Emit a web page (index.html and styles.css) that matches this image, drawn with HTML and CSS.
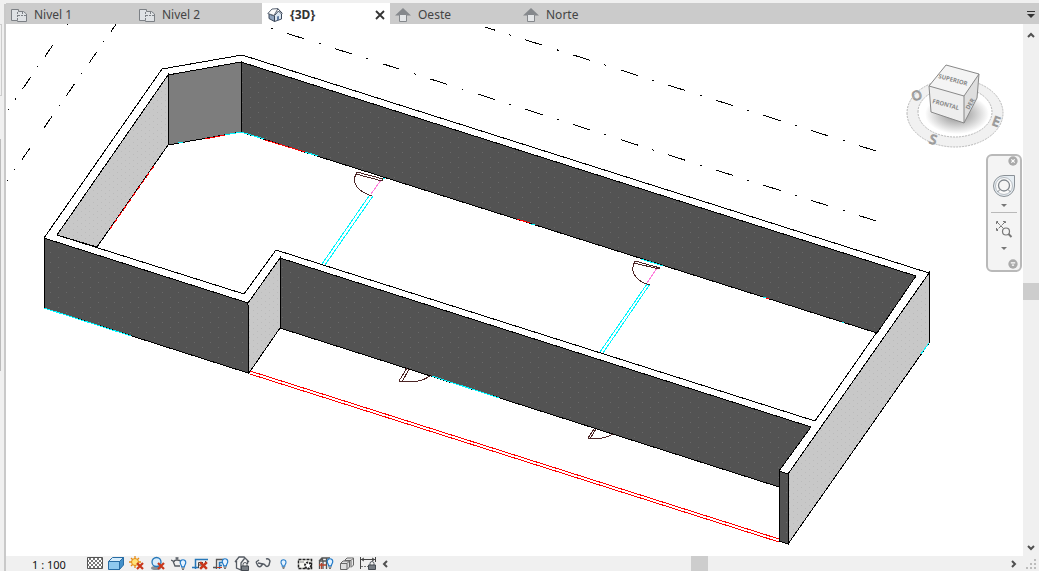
FILE: index.html
```
<!DOCTYPE html>
<html lang="es">

<head>
    <meta charset="UTF-8">
    <meta name="viewport" content="width=device-width, initial-scale=1.0">
    <title>{3D}</title>
    <link rel="stylesheet" href="styles.css">
</head>

<body>
    <!-- Shared icon parts -->
    <svg class="sprite" aria-hidden="true">
        <symbol id="plan" viewBox="0 0 16 14">
            <path d="M.5 1.500H7.500V3.500H12.500L15.500 6V13.500H6.500V12.500H.5Z" fill="#dfe2e5" stroke="#7c8085" />
            <path d="M6.500 12V4M7 7.500H15M11.500 4V7" fill="none" stroke="#7c8085" stroke-dasharray="2 1" />
        </symbol>
        <symbol id="elevation" viewBox="0 0 16 14">
            <path d="M8 0L16 7.500H0Z" fill="#85888c" />
            <path d="M4.500 6.500H11.500V13.500H4.500Z" fill="#e4e6e8" stroke="#85888c" />
        </symbol>
        <symbol id="red-x" viewBox="0 0 8 8">
            <path d="M1 1L7 7M7 1L1 7" stroke="#c8371b" stroke-width="2.200" />
        </symbol>
        <symbol id="bulb" viewBox="0 0 8 12">
            <path d="M2.500 8.500C2.500 6.500 1 6 1 3.800A3 3 0 0 1 7 3.800C7 6 5.500 6.500 5.500 8.500Z" fill="#e5f3ff" stroke="#237bc9" stroke-width="1.300" />
            <path d="M2.500 10H5.500M3 11.500H5" stroke="#555" />
        </symbol>
        <symbol id="lock" viewBox="0 0 8 9">
            <path d="M2 4V2.500A2 2 0 0 1 6 2.500V4" fill="none" stroke="#555b63" />
            <path d="M.5 4H7.500V8.500H.5Z" fill="#777d84" stroke="#444a51" />
        </symbol>
    </svg>

    <aside class="gutter">
        <div class="panel-edge"></div>
        <div class="panel-line"></div>
    </aside>

    <div class="workspace">
        <nav class="tabs">
            <div class="tab">
                <button type="button"><svg class="tab-icon"><use href="#plan" /></svg>Nivel 1</button>
            </div>
            <div class="tab">
                <button type="button"><svg class="tab-icon"><use href="#plan" /></svg>Nivel 2</button>
            </div>
            <div class="tab active">
                <button type="button">
                    <svg class="tab-icon" viewBox="0 0 16 14">
                        <path d="M2 6V10.500L7.500 13.500V8Z" fill="#8fa3bd" stroke="#3a4658" />
                        <path d="M7.500 7.500L11.500 3L14.500 6V11L7.500 13.500Z" fill="#dbe6f1" stroke="#3a4658" />
                        <path d="M.8 5.500L5 1L11 .6L7 7.500Z" fill="#fbfbfb" stroke="#5b6573" />
                        <path d="M11 .8L15.500 5.500" stroke="#3a4658" />
                        <path d="M10 8.500L12 8V11.800L10 12.500Z" fill="#5f7ba0" />
                    </svg>{3D}
                </button>
                <button type="button" class="close" aria-label="Cerrar">
                    <svg viewBox="0 0 10 10"><path d="M1 1L9 9M9 1L1 9" stroke="#333" stroke-width="1.800" /></svg>
                </button>
            </div>
            <div class="tab">
                <button type="button"><svg class="tab-icon"><use href="#elevation" /></svg>Oeste</button>
            </div>
            <div class="tab">
                <button type="button"><svg class="tab-icon"><use href="#elevation" /></svg>Norte</button>
            </div>
            <button type="button" class="tab-list" aria-label="Lista de vistas">
                <svg viewBox="0 0 8 8"><path d="M0 .5H8" stroke="#333" /><path d="M0 3H8L4 7Z" fill="#333" /></svg>
            </button>
        </nav>

        <div class="view">
            <main class="canvas">
                <!-- Model, drawn in window coordinates -->
                <svg class="model" viewBox="6 24 1017 532" role="img" aria-label="Vista 3D">
                    <defs>
                        <pattern id="dark" width="16" height="10" patternUnits="userSpaceOnUse">
                            <rect width="16" height="10" fill="#535353" />
                            <path d="M2 2h1v1h-1zM10 7h1v1h-1z" fill="#696969" />
                        </pattern>
                        <pattern id="light" width="8" height="6" patternUnits="userSpaceOnUse">
                            <rect width="8" height="6" fill="#c8c8c8" />
                            <path d="M1 1h1v1h-1zM5 4h1v1h-1z" fill="#bbb" />
                        </pattern>
                    </defs>

                    <!-- Reference planes -->
                    <g class="edge">
                        <path class="level" d="M876 151L485 27" />
                        <path class="level" d="M876 221L264 26" />
                        <path class="grid-line" d="M75 13L8 110" />
                        <path class="grid-line" d="M119 20L7 181" />
                    </g>

                    <!-- Walls -->
                    <g class="edge">
                        <path d="M44 238L162 69L242 55L929 273L788 474L779 471L811 427L280 258L248 303Z" fill="#fff" />
                        <path d="M57 235L168 75L241 62L916 276L815 421L276 250L244 294Z" fill="#fff" />
                        <path d="M57 235L168 75V145L97 247Z" fill="url(#light)" />
                        <path d="M168 75L241 62V132L168 145Z" fill="#7d7d7d" />
                        <path d="M241 62L916 276L877 333L241 132Z" fill="url(#dark)" />
                        <path d="M44 238L248 303V373L44 308Z" fill="url(#dark)" />
                        <path d="M248 303L280 258V328L249 373Z" fill="url(#light)" />
                        <path d="M280 258L811 427L779 471V487L280 328Z" fill="url(#dark)" />
                        <path d="M788 474L929 273V343L788 544Z" fill="url(#light)" />
                        <path d="M779 471L788 474V544L779 541Z" fill="url(#dark)" />
                    </g>

                    <!-- Imported plan lines -->
                    <g class="cyan">
                        <path d="M44 308L131 336M225 135L241 132L264 139M305 152L318 156M432 376L499 398M921 354L929 343" />
                        <path d="M369 196L322 264M373 196L325 265M381 178L385 179M647 284L600 352M650 284L603 353M641 259L663 266M763 297L766 298M842 322L844 323M178 143L183 142M531 224L535 225" />
                    </g>
                    <g class="red">
                        <path d="M250 371L779 539M250 374L779 542M205 139L225 135M265 140L305 152M517 219L530 223M766 298L769 299" />
                        <path d="M154 166L110 229" stroke-dasharray="6 2" />
                    </g>
                    <path class="pink" d="M381 180L371 194M657 268L647 283" />
                    <g class="door">
                        <path d="M357 172L383 179L382 181L356 174M357 172Q352 180 357 187Q362 193 372 196" />
                        <path d="M635 261L660 268L659 269L634 263M635 261Q630 270 636 277Q641 283 650 285" />
                        <path d="M407 368L399 381L402 382L409 369M400 381Q419 384 430 376" />
                        <path d="M594 429L588 438L590 439L596 429M588 438Q604 440 613 434" />
                    </g>
                </svg>

                <!-- View cube -->
                <svg class="view-cube" viewBox="905 60 100 90" role="img" aria-label="Cubo de vista">
                    <defs>
                        <radialGradient id="shade">
                            <stop offset=".3" stop-color="#aaa" />
                            <stop offset="1" stop-color="#aaa" stop-opacity="0" />
                        </radialGradient>
                    </defs>
                    <path d="M907 113A48 34 0 1 0 1003 113A48 34 0 1 0 907 113ZM918 112A37 25 0 1 1 992 112A37 25 0 1 1 918 112Z" fill="#f1f1f1" stroke="#b8b8b8" stroke-dasharray="2 1" fill-rule="evenodd" />
                    <ellipse cx="957" cy="114" rx="32" ry="20" fill="url(#shade)" />
                    <path d="M946 65L979 74L964 96L929 86Z" fill="#f4f4f4" />
                    <path d="M929 86L964 96V123L931 112Z" fill="#eee" />
                    <path d="M964 96L979 74L977 98L964 123Z" fill="#dedede" />
                    <path d="M929 86L946 65L979 74L977 98L964 123L931 112ZM929 86L964 96L979 74M964 96V123" fill="none" stroke="#888" />
                    <text class="face" transform="translate(938 78) rotate(15)">SUPERIOR</text>
                    <text class="face" transform="translate(932 103) rotate(15)">FRONTAL</text>
                    <text class="face" transform="translate(969 110) rotate(-60)">DER</text>
                    <text class="compass" transform="translate(917 96) rotate(-20)" y="4">O</text>
                    <text class="compass" transform="translate(933 140) rotate(15)" y="4">S</text>
                    <text class="compass" transform="translate(996 122) rotate(20)" y="4">E</text>
                </svg>

                <!-- Navigation bar -->
                <div class="nav-bar">
                    <button type="button" class="nav-small" aria-label="Cerrar barra">
                        <svg viewBox="0 0 9 9"><circle cx="4.500" cy="4.500" r="4.200" fill="#aaa" /><path d="M3 3L6 6M6 3L3 6" stroke="#fff" /></svg>
                    </button>
                    <button type="button" class="nav-tool" aria-label="Rueda de navegación">
                        <svg viewBox="0 0 24 24">
                            <path d="M12 1.500H22.500V12A10.500 10.500 0 1 1 12 1.500Z" fill="#e6edf2" stroke="#8b9197" />
                            <circle cx="12" cy="12" r="8.500" fill="#fafafa" stroke="#b8bec4" />
                            <circle cx="12" cy="11.500" r="5.500" fill="#f5f5f5" stroke="#81878d" stroke-width="1.300" />
                            <path d="M8 15.500L5.500 18M16 15.500L18.500 18" stroke="#81878d" />
                        </svg>
                    </button>
                    <button type="button" class="nav-more" aria-label="Más ruedas"><svg viewBox="0 0 6 3"><path d="M0 0H6L3 3Z" fill="#777" /></svg></button>
                    <hr>
                    <button type="button" class="nav-zoom" aria-label="Zoom">
                        <svg viewBox="0 0 18 18">
                            <path d="M1.500 4V1.500H4M8 1.500H10.500V4M1.500 8V10.500H4M2 2L10 10M10 2L2 10" fill="none" stroke="#777" stroke-dasharray="4 1" />
                            <circle cx="11" cy="11.500" r="3.500" fill="#f4f4f4" stroke="#777" stroke-width="1.200" />
                            <path d="M13.500 14L16.500 17" stroke="#777" stroke-width="2" />
                        </svg>
                    </button>
                    <button type="button" class="nav-more" aria-label="Más zoom"><svg viewBox="0 0 6 3"><path d="M0 0H6L3 3Z" fill="#777" /></svg></button>
                    <button type="button" class="nav-small nav-options" aria-label="Opciones">
                        <svg viewBox="0 0 9 9"><circle cx="4.500" cy="4.500" r="4.200" fill="#aaa" /><path d="M2.500 3.500H6.500M3.500 5.500H5.500" stroke="#fff" /></svg>
                    </button>
                </div>
            </main>

            <div class="scroll vertical">
                <button type="button" aria-label="Arriba"><svg viewBox="0 0 8 8"><path d="M1 6L4 3L7 6" /></svg></button>
                <div class="track"><div class="thumb"></div></div>
                <button type="button" aria-label="Abajo"><svg viewBox="0 0 8 8"><path d="M1 2L4 5L7 2" /></svg></button>
            </div>
        </div>

        <footer class="status">
            <button type="button" class="scale">1 : 100</button>
            <button type="button" class="tool" aria-label="Nivel de detalle">
                <svg viewBox="0 0 16 15">
                    <defs>
                        <pattern id="check" width="4" height="4" patternUnits="userSpaceOnUse">
                            <rect width="4" height="4" fill="#fff" />
                            <path d="M0 0H2V2H0ZM2 2H4V4H2Z" fill="#777" />
                        </pattern>
                    </defs>
                    <path d="M.5 1.500H15.500V12.500H.5Z" fill="url(#check)" stroke="#555" />
                </svg>
            </button>
            <button type="button" class="tool" aria-label="Estilo visual">
                <svg viewBox="0 0 16 15">
                    <path d="M.5 5.500L4.500 1.500H15.500L11.500 5.500Z" fill="#d5ecfb" stroke="#286ca4" />
                    <path d="M.5 5.500H11.500V13.500H.5Z" fill="#8fc9ef" stroke="#286ca4" />
                    <path d="M11.500 5.500L15.500 1.500V9L11.500 13.500Z" fill="#4390ca" stroke="#286ca4" />
                </svg>
            </button>
            <button type="button" class="tool" aria-label="Camino de sol">
                <svg viewBox="0 0 16 15">
                    <path d="M6 0V12M0 6H12M2 2L10 10M10 2L2 10" stroke="#e58a13" stroke-width="1.300" />
                    <circle cx="6" cy="6" r="3.500" fill="#ffe27a" stroke="#e58a13" />
                    <use href="#red-x" x="7" y="6" width="8" height="8" />
                </svg>
            </button>
            <button type="button" class="tool" aria-label="Sombras">
                <svg viewBox="0 0 16 15">
                    <ellipse cx="6" cy="12" rx="5" ry="2" fill="#8a8f95" />
                    <circle cx="6.500" cy="6" r="4.500" fill="#d9edfc" stroke="#2677b8" stroke-width="1.300" />
                    <use href="#red-x" x="7" y="6" width="8" height="8" />
                </svg>
            </button>
            <button type="button" class="tool" aria-label="Modelizado">
                <svg viewBox="0 0 16 15">
                    <path d="M0 4L2 5L4 10H9M3 6Q3 4 6 4Q10 4 10 7M6 4V2M4.500 2H7.500" fill="none" stroke="#555b63" stroke-width="1.300" />
                    <use href="#bulb" x="8" y="3" width="8" height="11" />
                </svg>
            </button>
            <button type="button" class="tool" aria-label="Recortar vista">
                <svg viewBox="0 0 16 15">
                    <path d="M3.500 13V3.500H16M0 11.500H7" fill="none" stroke="#2677b8" stroke-width="1.500" />
                    <path d="M6.500 12V6.500H11M7 9H10M13.500 5V9" fill="none" stroke="#444" />
                    <use href="#red-x" x="7" y="5" width="9" height="9" />
                </svg>
            </button>
            <button type="button" class="tool" aria-label="Mostrar región de recorte">
                <svg viewBox="0 0 16 15">
                    <path d="M3.500 13V3.500H10M0 11.500H3" fill="none" stroke="#555" stroke-width="1.300" />
                    <path d="M6.500 13V6.500H10M7 9.500H9" fill="none" stroke="#2677b8" stroke-width="1.500" />
                    <path d="M4 11.500H9" stroke="#c8371b" />
                    <use href="#bulb" x="8" y="2" width="8" height="11" />
                </svg>
            </button>
            <button type="button" class="tool" aria-label="Vista 3D bloqueada">
                <svg viewBox="0 0 16 15">
                    <path d="M1 6L5 1H10L15 6M2.500 5V12L7 14V7L10.500 2.500M13.500 5V8" fill="#f6f6f6" stroke="#555b63" stroke-width="1.300" />
                    <use href="#lock" x="7" y="6" width="8" height="9" />
                </svg>
            </button>
            <button type="button" class="tool" aria-label="Ocultar o aislar">
                <svg viewBox="0 0 16 15">
                    <path d="M1 6L3 10Q5 12 7 9Q8 7 10 9Q12 12 14 9L15 5Q14 2 11 3M1 6L4 4M3 7L8 8" fill="none" stroke="#555b63" stroke-width="1.400" />
                </svg>
            </button>
            <button type="button" class="tool" aria-label="Mostrar elementos ocultos">
                <svg viewBox="0 0 16 15"><use href="#bulb" x="4" y="3" width="7" height="10" /></svg>
            </button>
            <button type="button" class="tool" aria-label="Propiedades temporales">
                <svg viewBox="0 0 16 15">
                    <path d="M1.500 3.500H14.500V12.500H1.500Z" fill="#f7f7f2" stroke="#222" stroke-width="1.500" stroke-dasharray="3 1" />
                    <circle cx="11" cy="9.500" r="3" fill="#fff" stroke="#222" stroke-width="2" stroke-dasharray="2 1" />
                    <path d="M3 6H7" stroke="#888" />
                </svg>
            </button>
            <button type="button" class="tool" aria-label="Modelo analítico">
                <svg viewBox="0 0 16 15">
                    <path d="M1 5L4 2H12M1 5H9M1.500 5V13M5 5V13M8.500 5V13M4.500 2V5M8.500 2V5" fill="none" stroke="#555" stroke-width="1.300" />
                    <path d="M1 9H8M3.500 7V13" stroke="#b9442c" stroke-width="1.300" />
                    <use href="#bulb" x="8" y="2" width="8" height="11" />
                </svg>
            </button>
            <button type="button" class="tool" aria-label="Conjuntos de desplazamiento">
                <svg viewBox="0 0 16 15">
                    <path d="M5.500 4.500L8 2H14.500V9L12 11.500" fill="#e8e8e8" stroke="#666" />
                    <path d="M1.500 7.500L4 5H10.500V11L8 13.500H1.500ZM1.500 7.500H8V13.500M8 7.500L10.500 5M6 4.500H12L14.500 2M12 4.500V11" fill="#ddd" stroke="#666" />
                </svg>
            </button>
            <button type="button" class="tool" aria-label="Restricciones">
                <svg viewBox="0 0 16 15">
                    <path d="M1 3.500H15M.5 1V13M15.500 1V6M4 2L1.500 3.500L4 5M12 2L14.500 3.500L12 5" fill="none" stroke="#444" />
                    <path d="M1 10.500H8" stroke="#777" stroke-dasharray="2 1" />
                    <use href="#lock" x="8" y="5" width="8" height="9" />
                </svg>
            </button>

            <div class="scroll horizontal">
                <button type="button" aria-label="Izquierda"><svg viewBox="0 0 8 8"><path d="M5 1L2 4L5 7" /></svg></button>
                <div class="track"><div class="thumb"></div></div>
                <button type="button" aria-label="Derecha"><svg viewBox="0 0 8 8"><path d="M3 1L6 4L3 7" /></svg></button>
            </div>
            <svg class="grip" viewBox="0 0 18 15">
                <path d="M13 3h2v2h-2zM9 7h2v2h-2zM13 7h2v2h-2zM5 11h2v2h-2zM9 11h2v2h-2zM13 11h2v2h-2z" fill="#bcbcbc" />
            </svg>
        </footer>
    </div>
</body>

</html>
```
FILE: styles.css
```
* {
    box-sizing: border-box;
}

body {
    display: flex;
    height: 100vh;
    margin: 0;
    overflow: hidden;
    background: #f0f0f0;
    color: #444;
    font-family: "Noto Sans", "Open Sans", sans-serif;
    font-size: 12px;
}

button {
    display: flex;
    align-items: center;
    justify-content: center;
    padding: 0;
    border: none;
    background: none;
    color: inherit;
    font: inherit;
}

svg {
    display: block;
}

.sprite {
    position: absolute;
    width: 0;
    height: 0;
}

/* Docked panel edge on the left */
.gutter {
    display: flex;
    flex-direction: column;
    gap: 43px;
    width: 6px;
    margin-top: 4px;
    padding-top: 20px;
    border-right: 2px solid #c9c9c9;
}

.panel-edge {
    width: 2px;
    height: 72px;
    border: 1px solid #ccc;
    border-left: none;
}

.panel-line {
    width: 1px;
    height: 232px;
    background: #bbb;
}

.workspace {
    display: flex;
    flex: 1;
    flex-direction: column;
    min-width: 0;
}

/* View tabs */
.tabs {
    display: flex;
    height: 21px;
    margin-top: 3px;
    background: #cbcbcb;
}

.tab {
    display: flex;
    align-items: center;
    justify-content: space-between;
    width: 128px;
    padding: 0 5px;
}

.tab button {
    gap: 7px;
    height: 21px;
    padding-top: 2px;
}

.tab.active {
    background: #fff;
    color: #333;
    font-weight: bold;
}

.tab-icon {
    width: 16px;
    height: 14px;
}

.close svg {
    width: 10px;
    height: 10px;
}

.tab-list {
    width: 16px;
    margin-left: auto;
    padding-top: 2px;
}

.tab-list svg {
    width: 8px;
    height: 8px;
}

/* Drawing area */
.view {
    display: flex;
    flex: 1;
    min-height: 0;
}

.canvas {
    position: relative;
    flex: 1;
    min-width: 0;
    background: #fff;
}

.model {
    width: 100%;
    height: 100%;
    shape-rendering: crispEdges;
}

.edge {
    fill: none;
    stroke: #000;
}

.level {
    stroke-dasharray: 18 15 2 15;
}

.grid-line {
    stroke-dasharray: 14 12 1 12;
}

.cyan {
    fill: none;
    stroke: #00f6ff;
}

.red {
    fill: none;
    stroke: #f00;
}

.pink {
    fill: none;
    stroke: #ff7fdc;
}

.door {
    fill: none;
    stroke: #4b2424;
}

.view-cube {
    position: absolute;
    top: 36px;
    right: 18px;
    width: 100px;
    height: 90px;
}

.face {
    fill: #888;
    font-size: 6px;
    font-weight: bold;
}

.compass {
    fill: #f4f4f4;
    stroke: #999;
    font-size: 13px;
    text-anchor: middle;
}

/* Navigation bar */
.nav-bar {
    position: absolute;
    top: 130px;
    right: 1px;
    display: flex;
    flex-direction: column;
    align-items: center;
    width: 36px;
    height: 118px;
    border: 2px solid #b9b9b9;
    border-radius: 6px;
    background: #f4f4f4;
}

.nav-bar hr {
    width: 26px;
    margin: 2px 0;
    border: none;
    border-top: 1px solid #b9b9b9;
}

.nav-small {
    align-self: flex-end;
    margin-right: 2px;
}

.nav-small svg {
    width: 10px;
    height: 10px;
}

.nav-tool {
    margin: 8px 0 3px;
}

.nav-tool svg {
    width: 24px;
    height: 24px;
}

.nav-more {
    height: 9px;
}

.nav-more svg {
    width: 6px;
    height: 3px;
}

.nav-zoom {
    margin: 5px 0 6px;
}

.nav-zoom svg {
    width: 18px;
    height: 18px;
}

.nav-options {
    margin-top: auto;
    margin-bottom: 1px;
}

/* Scroll bars */
.scroll {
    display: flex;
    background: #f0f0f0;
}

.scroll button {
    width: 16px;
    height: 15px;
}

.scroll svg {
    width: 8px;
    height: 8px;
    fill: none;
    stroke: #505050;
    stroke-width: 2;
}

.track {
    display: flex;
    flex: 1;
    align-items: center;
    justify-content: center;
}

.thumb {
    background: #cdcdcd;
}

.vertical {
    flex-direction: column;
    width: 16px;
    padding: 3px 0 1px;
}

.vertical .thumb {
    width: 16px;
    height: 17px;
}

.horizontal {
    flex: 1;
}

.horizontal .thumb {
    width: 17px;
    height: 15px;
}

/* View control bar */
.status {
    display: flex;
    height: 15px;
    background: #f0f0f0;
}

.scale {
    justify-content: flex-start;
    width: 78px;
    padding-top: 3px;
    padding-left: 26px;
    color: #111;
    font-size: 11px;
    line-height: 12px;
}

.tool {
    width: 21px;
}

.tool svg {
    width: 16px;
    height: 15px;
}

.grip {
    width: 18px;
    height: 15px;
}
```
